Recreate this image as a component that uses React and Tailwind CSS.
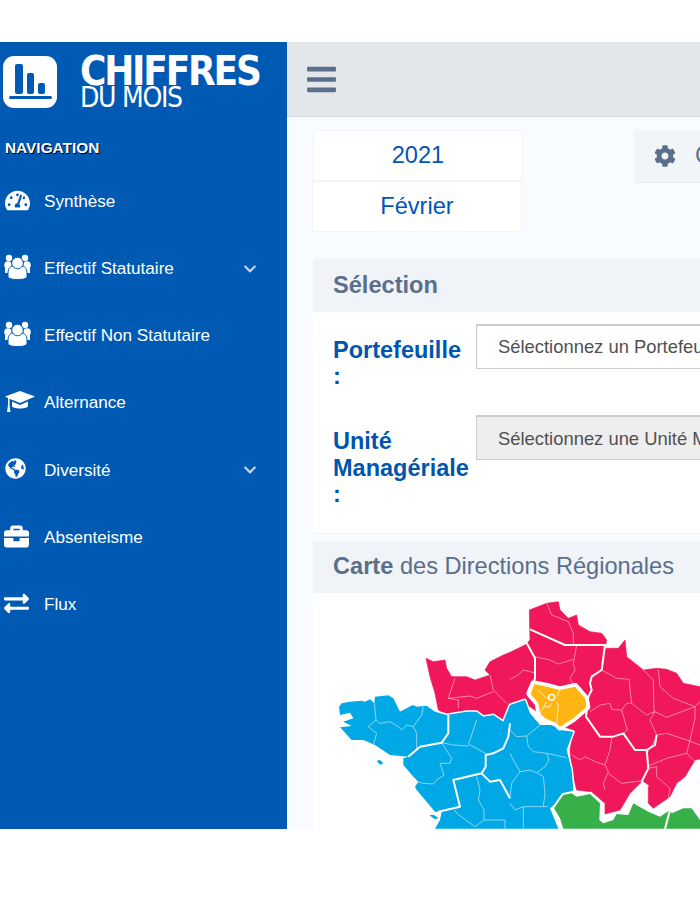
import React from 'react';
import {
  FaBars,
  FaBriefcase,
  FaChevronDown,
  FaCog,
  FaExchangeAlt,
  FaGlobeAmericas,
  FaTachometerAlt
} from "react-icons/fa";

const PeopleIcon = ({ className }) => (
  <svg viewBox="0 0 27 26" className={className} fill="currentColor">
    <circle cx="5" cy="4" r="3.2" />
    <circle cx="21" cy="4" r="3.2" />
    <circle cx="4" cy="11" r="3.8" />
    <circle cx="23" cy="11" r="3.8" />
    <path d="M1 14h6v5H1z" />
    <path d="M20 14h6v5h-6z" />
    <path d="M4 19c0-5 3-7 5-7h9c2 0 5 2 5 7v3c0 2-2 3.500-9.500 3.500S4 24 4 22z" stroke="#005ab4" />
    <circle cx="13.500" cy="9" r="5.800" stroke="#005ab4" />
  </svg>
);

const CapIcon = ({ className }) => (
  <svg viewBox="0 0 30 21" className={className} fill="currentColor">
    <path d="M15 0 30 5.500 15 12 5 8v0L0 5.500z" />
    <path d="M7 10.500 15 14l8-3.500V15c0 1.500-3.500 2.500-8 2.500S7 16.500 7 15z" />
    <path d="M3 7h1.500v7l1 7H2l1-7z" />
  </svg>
);

const NAV_ITEMS = [
  { label: "Synthèse", icon: FaTachometerAlt, size: "w-[25px] h-[25px]" },
  { label: "Effectif Statutaire", icon: PeopleIcon, size: "w-[27px] h-[26px] -ml-[1px]", arrow: true },
  { label: "Effectif Non Statutaire", icon: PeopleIcon, size: "w-[27px] h-[26px] -ml-[1px]" },
  { label: "Alternance", icon: CapIcon, size: "w-[30px] h-[21px]" },
  { label: "Diversité", icon: FaGlobeAmericas, size: "w-[21px] h-[21px]", arrow: true },
  { label: "Absenteisme", icon: FaBriefcase, size: "w-[25px] h-[25px] -ml-[1px]" },
  { label: "Flux", icon: FaExchangeAlt, size: "w-[25px] h-[25px] -ml-[1px]" }
];

const BLUE = "57,350 65,340 90,335 125,332 135,335 150,328 163,340 165,320 205,316 220,325 240,365 278,345 290,350 320,347 345,365 380,375 440,365 470,365 490,380 520,375 550,395 570,345 615,330 630,370 660,405 700,405 720,420 760,425 740,480 755,540 760,600 710,640 690,655 715,716 345,716 360,690 365,665 345,665 290,600 285,590 295,575 280,560 250,525 250,505 265,500 210,495 165,465 130,450 95,450 60,412 95,408 70,395 100,385 90,368 60,375";
const RED = "318,205 340,215 375,210 380,235 395,260 440,260 465,270 510,255 495,240 510,215 550,195 570,187 615,165 630,150 628,60 680,40 715,35 720,60 745,85 770,75 775,105 810,125 845,130 860,150 855,175 895,175 915,150 920,200 970,240 1010,235 1040,238 1070,250 1090,280 1140,290 1270,290 1270,480 1125,510 1095,560 1070,580 1050,620 1000,655 985,640 985,590 965,575 930,610 900,660 855,672 855,640 815,605 770,600 755,540 750,480 760,420 700,400 630,350 570,345 550,395 520,375 490,380 470,365 440,365 380,375 355,360 345,310 330,260";
const GREEN = "702,655 730,615 755,610 770,620 810,612 840,640 838,690 850,700 880,690 890,672 925,675 940,640 985,665 1020,680 1050,660 1055,670 1090,655 1115,655 1140,690 1140,716 730,716 720,685";
const YELLOW = "630,310 642,282 680,290 720,300 765,290 795,325 800,350 760,385 720,410 710,400 675,385 660,370 655,340";

const THICK_LINES = [
  "385,375 385,430 365,458 300,470 265,500",
  "570,400 565,440 550,475 520,490 497,495 497,530 485,550 400,570 420,650 355,665",
  "485,550 510,575 540,570 570,625",
  "630,118 735,165 855,165 845,240 815,260 810,280 815,300 805,320 798,380 840,440 880,440 910,430 945,480 980,480 1005,465 1010,435",
  "980,480 985,535 965,575 985,590",
  "618,155 645,205 645,265 630,310",
  "1050,660 1035,716"
];

const THIN_BLUE = [
  "163,340 168,390 180,400 210,395 235,410 245,420 260,405 280,410 305,375 310,350",
  "168,390 145,410 170,430 160,465",
  "280,410 290,430 290,480",
  "365,458 395,505 390,520 360,520 372,555 350,570 340,582 310,580 290,575",
  "470,390 450,450 445,462 500,492",
  "365,458 400,465 445,468",
  "470,560 480,600 475,630 492,660 492,690 465,710 410,670 405,660",
  "492,690 555,690 555,716",
  "570,420 590,440 620,438 660,405",
  "620,438 625,470 640,485 680,490 740,503",
  "680,490 687,510 675,530 650,548 670,560 675,610 670,648",
  "570,490 580,510 600,545 585,565 575,580 570,620",
  "600,545 630,540 650,548",
  "570,640 585,660 610,650 685,650",
  "610,650 610,716"
];

const THIN_RED = [
  "680,40 695,75 745,95 760,130 760,165",
  "770,165 760,220 765,240 750,265 760,285",
  "645,200 690,210 715,222 760,208",
  "570,268 595,255 610,240 642,248",
  "510,255 520,300 560,340",
  "405,265 385,325 415,330 415,355",
  "385,325 450,318 470,325 520,305",
  "845,240 890,265 928,268 930,300 935,340 980,375 1005,365 1040,382 1125,350 1140,335",
  "970,240 1000,270 1002,365",
  "1015,240 1020,290 1060,325 1125,350 1125,385 1110,450 1100,490 1125,515",
  "810,365 840,345 870,340 875,358 905,360 920,340 935,340",
  "905,360 922,420 910,430",
  "1005,365 990,390 1010,435 1000,460 980,490",
  "1010,435 1040,430 1100,450 1140,465",
  "980,530 1040,505 1100,490",
  "875,445 870,480 855,525 865,545 850,580 855,600",
  "855,525 825,515 795,500 780,510 755,495",
  "865,550 905,580 970,572",
  "985,535 1010,530 1010,560 1050,595 1045,625"
];

const THIN_YELLOW = [
  "655,300 680,325 695,322",
  "720,300 710,320",
  "680,335 660,370",
  "710,335 715,345 710,400",
  "695,340 690,350 672,350"
];

const FranceMap = () => (
  <svg viewBox="0 9 1260 708" className="block ml-[7px] w-[420px] h-[236px] shrink-0">
    <polygon points={RED} fill="#f0175a" stroke="#f0175a" strokeLinejoin="round" strokeWidth="2" />
    <polygon points={BLUE} fill="#00a8e6" stroke="#fff" strokeLinejoin="round" strokeWidth="9" paintOrder="stroke" />
    <polygon points={GREEN} fill="#38b04a" stroke="#fff" strokeLinejoin="round" strokeWidth="12" paintOrder="stroke" />
    <polygon points={YELLOW} fill="#ffb612" stroke="#fff" strokeLinejoin="round" strokeWidth="22" paintOrder="stroke" />
    {THIN_BLUE.map((line) => (
      <polyline key={line} points={line} fill="none" stroke="#a5e0f6" strokeWidth="2.5" />
    ))}
    {THIN_RED.map((line) => (
      <polyline key={line} points={line} fill="none" stroke="#f99cb8" strokeWidth="2.5" />
    ))}
    {THIN_YELLOW.map((line) => (
      <polyline key={line} points={line} fill="none" stroke="#ffe9b0" strokeWidth="3" />
    ))}
    <circle cx="695" cy="322" r="9" fill="#ffb612" stroke="#fff" strokeWidth="4" />
    {THICK_LINES.map((line) => (
      <polyline key={line} points={line} fill="none" stroke="#fff" strokeWidth="6" strokeLinejoin="round" />
    ))}
    <polygon points="170,512 180,510 190,520 180,524" fill="#00a8e6" />
    <polygon points="328,676 340,674 356,684 345,688" fill="#00a8e6" />
  </svg>
);

const Logo = () => (
  <div className="flex items-start h-[74px] pt-[14px] pl-[3px]">
    <svg viewBox="0 0 54 52" className="w-[54px] h-[52px] shrink-0">
      <rect width="54" height="52" rx="11" fill="#fff" />
      <rect x="12" y="8" width="8" height="30" rx="2" fill="#005ab4" />
      <rect x="24" y="17" width="7" height="21" rx="2" fill="#005ab4" />
      <rect x="35" y="27" width="7" height="11" rx="2" fill="#005ab4" />
      <rect x="6" y="40" width="43" height="3" rx="1.500" fill="#005ab4" />
    </svg>
    <div className="ml-[23px] text-white font-['DejaVu_Sans_Condensed','DejaVu_Sans',sans-serif]">
      <div className="text-[40px] leading-[31px] font-bold tracking-[-2.2px] whitespace-nowrap">CHIFFRES</div>
      <div className="text-[28px] leading-[22px] tracking-[-1.3px] whitespace-nowrap">DU MOIS</div>
    </div>
  </div>
);

const Sidebar = () => (
  <aside className="w-[287px] shrink-0 bg-[#005ab4] text-white">
    <Logo />
    <h2 className="mt-[24px] ml-[5px] text-[15.4px] leading-[16px] font-bold [text-shadow:1px_1px_0_#000]">
      NAVIGATION
    </h2>
    <nav className="mt-[12px]">
      {NAV_ITEMS.map(({ label, icon: Icon, size, arrow }) => (
        <div key={label} className="flex items-center h-[67.2px] pl-[5px] pr-[30px]">
          <div className="w-[25px] shrink-0 -mt-[3px]">
            <Icon className={size} />
          </div>
          <span className="ml-[14px] text-[17.1px]">{label}</span>
          {arrow && <FaChevronDown className="ml-auto w-[14px] h-[14px] text-[#c3d4e8]" />}
        </div>
      ))}
    </nav>
  </aside>
);

const PanelHeader = ({ children }) => (
  <div className="h-[52.5px] flex items-center px-[20px] bg-[#f0f3f7] rounded-t-[4px] text-[23.6px] text-[#5a6f8c] whitespace-nowrap">
    {children}
  </div>
);

const SelectRow = ({ label, placeholder, disabled, className }) => (
  <div className={`flex items-start ${className}`}>
    <div className="w-[143px] shrink-0 pt-[13px] pr-[4px] text-[23.5px] leading-[26.4px] font-bold text-[#0056ae]">
      {label}
      <br />:
    </div>
    <div className={`w-[400px] h-[45px] flex items-center pl-[21px] border border-t-2 border-[#cccccc] text-[18.4px] text-[#505050] whitespace-nowrap ${disabled ? "bg-[#eeeeee]" : "bg-white"}`}>
      {placeholder}
    </div>
  </div>
);

const App = () => (
  <div className="w-[700px] h-[900px] bg-white overflow-hidden pt-[42px] font-['Liberation_Sans',sans-serif]">
    <div className="flex h-[787px]">
      <Sidebar />
      <main className="flex-1 min-w-0 bg-[#f8fbff] overflow-hidden">
        <header className="h-[75px] flex items-center pl-[20px] bg-[#e4e7ea] border-b border-[#d8dbde]">
          <FaBars className="w-[29px] h-[33px] text-[#5a6f8c]" />
        </header>

        <div className="w-[700px] pl-[26px]">
          <div className="flex items-start mt-[13px]">
            <div className="w-[210px]">
              <div className="h-[51px] flex items-center justify-center bg-white border border-[#f2f4f7] rounded-t-[4px] text-[23.6px] text-[#0056b8]">
                2021
              </div>
              <div className="h-[51px] flex items-center justify-center -ml-[1px] mr-[1px] bg-white border border-[#f2f4f7] text-[23.6px] text-[#0056b8]">
                Février
              </div>
            </div>
            <div className="ml-[111px] w-[200px] h-[53px] flex items-center gap-[19px] pl-[20px] bg-[#f2f5f8] border-b border-[#e8ebef] rounded-[4px] text-[23.6px] text-[#5a6f8c]">
              <FaCog className="w-[22px] h-[22px] shrink-0" />
              <span>Configuration</span>
            </div>
          </div>

          <section className="mt-[27px]">
            <PanelHeader><b>Sélection</b></PanelHeader>
            <div className="h-[222px] pl-[20px] pt-[12px] bg-white border-b border-[#f2f4f7]">
              <SelectRow label="Portefeuille" placeholder="Sélectionnez un Portefeuille" />
              <SelectRow label="Unité Managériale" placeholder="Sélectionnez une Unité Managériale" disabled className="mt-[26px]" />
            </div>
          </section>

          <section className="mt-[7px]">
            <PanelHeader><span><b>Carte</b> des Directions Régionales</span></PanelHeader>
            <div className="bg-white">
              <FranceMap />
            </div>
          </section>
        </div>
      </main>
    </div>
  </div>
);

export default App;
